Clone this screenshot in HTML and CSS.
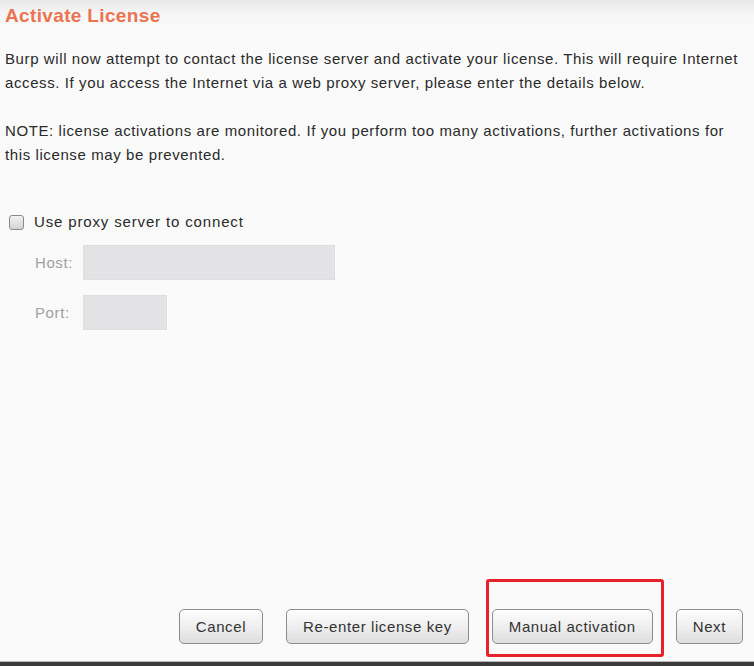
FILE: index.html
```html
<!DOCTYPE html>
<html lang="en">
<head>
<meta charset="utf-8">
<title>Activate License</title>
<link rel="stylesheet" href="styles.css">
</head>
<body>
<div class="dialog">
  <h1 class="title">Activate License</h1>
  <div class="content">
    <p class="text">Burp will now attempt to contact the license server and activate your license. This will require Internet access. If you access the Internet via a web proxy server, please enter the details below.</p>
    <p class="text">NOTE: license activations are monitored. If you perform too many activations, further activations for this license may be prevented.</p>
    <label class="check">
      <span class="box"></span>
      <span>Use proxy server to connect</span>
    </label>
    <div class="proxy">
      <span class="plabel">Host:</span>
      <span class="field host"></span>
      <span class="plabel">Port:</span>
      <span class="field port"></span>
    </div>
  </div>
  <div class="buttons">
    <button class="btn">Cancel</button>
    <button class="btn">Re-enter license key</button>
    <span class="highlight"><button class="btn">Manual activation</button></span>
    <button class="btn">Next</button>
  </div>
  <div class="edge"></div>
</div>
</body>
</html>
```

FILE: styles.css
```css
html, body {
  margin: 0;
  padding: 0;
}
body {
  width: 754px;
  height: 666px;
  overflow: hidden;
  font-family: "Liberation Sans", Arial, sans-serif;
  color: #2a2a2a;
  background: #fafafa;
}
.dialog {
  height: 666px;
  display: flex;
  flex-direction: column;
  background: linear-gradient(to bottom, #e9e9e9 0px, #f6f6f6 14px, #fafafa 34px, #fafafa 100%);
}
.title {
  margin: 0;
  padding: 6px 0 0 5px;
  font-size: 19px;
  line-height: 20px;
  font-weight: bold;
  letter-spacing: 0.35px;
  color: #ec7350;
}
.content {
  flex: 1;
  padding: 0 4px 0 5px;
}
.text {
  margin: 0;
  font-size: 15px;
  letter-spacing: 0.6px;
  line-height: 23.5px;
}
.text:first-child {
  margin-top: 21px;
}
.text + .text {
  margin-top: 25px;
}
.check {
  margin-top: 46px;
  display: flex;
  align-items: center;
  gap: 10px;
  font-size: 15px;
  letter-spacing: 0.85px;
  line-height: 20px;
  padding-left: 4px;
}
.box {
  border: 1px solid #8a8a8a;
  border-radius: 3px;
  background: linear-gradient(to bottom, #f2f2f2, #d2d2d2);
  box-sizing: border-box;
  width: 15px;
  height: 15px;
}
.proxy {
  margin-top: 13px;
  display: grid;
  grid-template-columns: 48px auto;
  justify-content: start;
  align-items: center;
  row-gap: 15px;
  padding-left: 30px;
  font-size: 15px;
  letter-spacing: 0.6px;
}
.plabel {
  color: #a0a0a0;
}
.field {
  height: 35px;
  background: #e3e3e5;
  border: 1px solid #dedee0;
  box-sizing: border-box;
}
.host { width: 252px; }
.port { width: 84px; }
.buttons {
  display: flex;
  justify-content: flex-end;
  align-items: center;
  padding: 0 11px 17px 0;
  gap: 23px;
}
.btn {
  font-family: "Liberation Sans", Arial, sans-serif;
  font-size: 15px;
  letter-spacing: 0.6px;
  color: #333;
  height: 35px;
  padding: 0 16px;
  border: 1px solid #8c8c8c;
  border-radius: 5px;
  background: linear-gradient(to bottom, #fdfdfd 0%, #f0f0f0 45%, #dedede 100%);
  box-shadow: inset 0 1px 0 #ffffff;
}
.btn-next {
  padding: 0 15px;
}
.highlight {
  position: relative;
  display: inline-flex;
}
.highlight::after {
  content: "";
  position: absolute;
  left: -6px;
  right: -11px;
  top: -30px;
  bottom: -13px;
  border: 3px solid #e8222a;
  border-radius: 3px;
}
.edge {
  height: 4px;
  border-top: 1px solid #b8b8b8;
  background: #3b3b3b;
}
```
